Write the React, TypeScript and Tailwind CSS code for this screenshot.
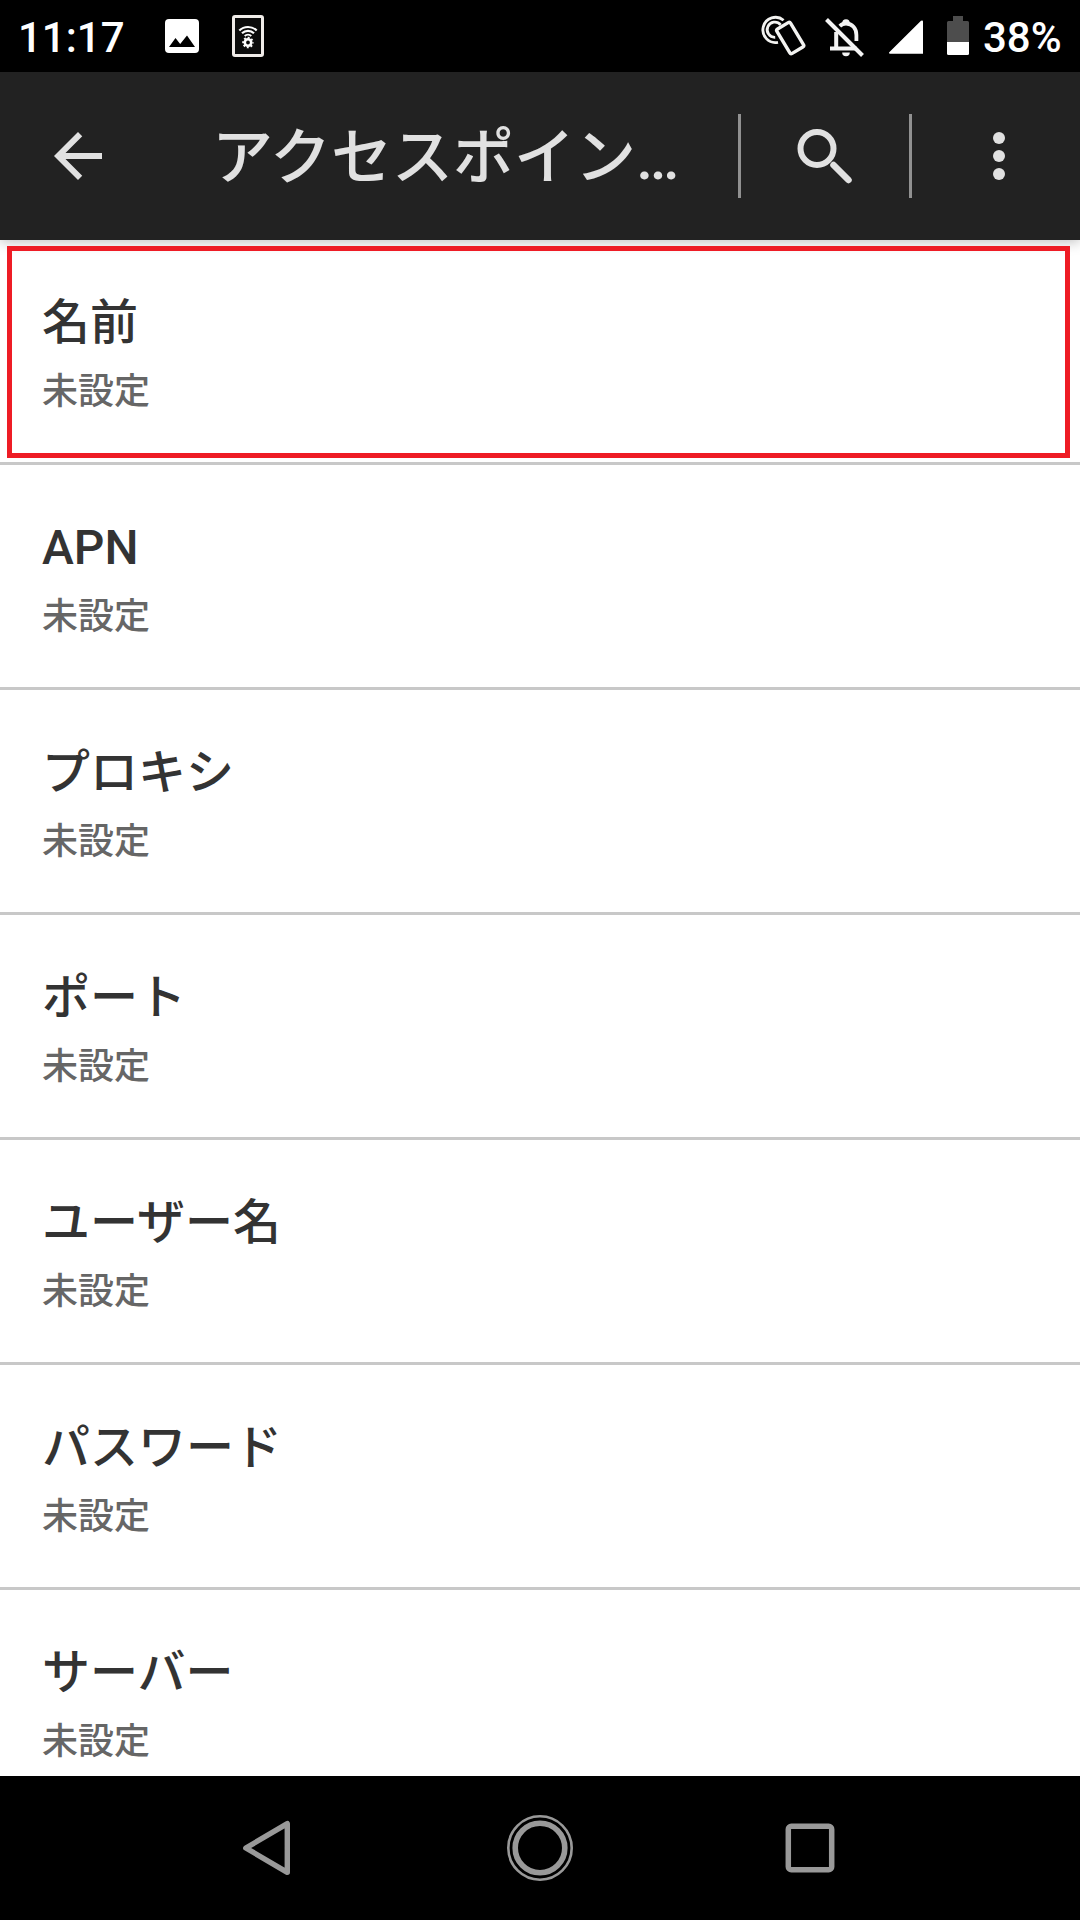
import React from 'react';

interface Setting {
  title: string;
  value: string;
  highlighted?: boolean;
}

const settings: Setting[] = [
  { title: '名前', value: '未設定', highlighted: true },
  { title: 'APN', value: '未設定' },
  { title: 'プロキシ', value: '未設定' },
  { title: 'ポート', value: '未設定' },
  { title: 'ユーザー名', value: '未設定' },
  { title: 'パスワード', value: '未設定' },
  { title: 'サーバー', value: '未設定' },
];

function PictureIcon() {
  return (
    <svg className="ml-[40px] h-9 w-9" viewBox="0 0 36 36">
      <rect x="1" y="1" width="34" height="34" rx="4" fill="#fff" />
      <path d="M5 29l6.500-9 4.700 6 6.800-8.500 8 11.500z" fill="#000" />
    </svg>
  );
}

function TetherIcon() {
  return (
    <svg className="ml-[32px] h-[42px] w-8" viewBox="0 0 32 42" fill="none" stroke="#fff">
      <rect x="1.500" y="1.500" width="29" height="39" rx="1.500" fill="#0c0c0c" stroke="#f0ece9" strokeWidth="3" />
      <path d="M7.300 15.500a12.500 12.500 0 0 1 17.400 0" strokeWidth="2.200" />
      <path d="M10 18.300a8.600 8.600 0 0 1 12 0" strokeWidth="2.200" />
      <path d="M12.700 21a4.800 4.800 0 0 1 6.600 0" strokeWidth="2" />
      <circle cx="16" cy="27.500" r="3.200" strokeWidth="2.600" />
      <circle cx="16" cy="27.500" r="4.900" strokeWidth="1.800" strokeDasharray="1.925 1.925" strokeDashoffset="0.960" />
    </svg>
  );
}

function TapIcon() {
  return (
    <svg className="h-[44px] w-[46px]" viewBox="0 0 46 44" fill="none" stroke="#f3f3f1" strokeWidth="2.800">
      <path d="M23.600 6.300A12.600 12.600 0 1 0 18 28.300" />
      <path d="M20.600 10.800A7.600 7.600 0 1 0 15.200 23.300" />
      <rect x="-8" y="-14.200" width="16" height="28.400" rx="1.800" transform="translate(30.200 24) rotate(-31)" strokeWidth="3.400" />
    </svg>
  );
}

function BellOffIcon() {
  return (
    <svg className="ml-[19px] h-[44px] w-[42px]" viewBox="0 0 42 44" fill="none" stroke="#f3f3f3">
      <path d="M17.200 9a3.600 3.600 0 1 1 7.600 0z" fill="#f3f3f3" stroke="none" />
      <path d="M14.800 12.200c2-2 4-2.700 6.200-2.700 6.200 0 10.400 4.800 10.400 11.400v6" strokeWidth="3.800" />
      <path d="M11.200 18v17M5 34.500h26.500" strokeWidth="4" />
      <path d="M17.200 38.500h7.600a3.800 3.800 0 0 1-7.600 0z" fill="#f3f3f3" stroke="none" />
      <path d="M1.500 5.500l36 36" strokeWidth="4" />
    </svg>
  );
}

function StatusBar() {
  return (
    <div className="flex h-[72px] shrink-0 items-center bg-black text-white">
      <span className="ml-[18px] w-[106px] pt-1 whitespace-nowrap text-[42px] leading-[72px] font-medium">11:17</span>
      <PictureIcon />
      <TetherIcon />
      <div className="ml-auto flex items-center">
        <TapIcon />
        <BellOffIcon />
        <svg className="ml-[21px] h-9 w-9" viewBox="0 0 36 36">
          <path d="M1 34.400L33 2.800q2-1.200 2 1v32H2q-1 0-1-1.400z" fill="#fff" />
        </svg>
        <svg className="ml-[22px] h-10 w-6" viewBox="0 0 24 40">
          <path d="M7 0h10v5h4.500q1.500 0 1.500 1.500V27H1V6.500Q1 5 2.500 5H7z" fill="#4d4d4d" />
          <path d="M1 26h22v11.500q0 1.500-1.500 1.500h-19Q1 39 1 37.500z" fill="#fff" />
        </svg>
        <span className="ml-[13px] w-[97px] pt-1 whitespace-nowrap text-[42px] leading-[72px] font-medium">38%</span>
      </div>
    </div>
  );
}

function Header() {
  return (
    <header className="relative z-10 flex h-[168px] shrink-0 items-center bg-[#222] text-[#e1e1e1] shadow-[0_2px_12px_rgba(0,0,0,0.25)]">
      <svg className="ml-[42px] h-[72px] w-[72px]" viewBox="0 0 24 24" fill="currentColor">
        <path d="M20 11H7.830l5.590-5.590L12 4l-8 8 8 8 1.410-1.410L7.830 13H20v-2z" />
      </svg>
      <h1 className="ml-[98px] w-[526px] pt-1 whitespace-nowrap text-[61px] leading-[84px] font-medium">アクセスポイン…</h1>
      <div className="h-[84px] w-[3px] bg-[#919191]" />
      <div className="flex w-[168px] justify-center">
        <svg className="h-[72px] w-[72px]" viewBox="0 0 72 72" fill="none" stroke="currentColor">
          <circle cx="28" cy="28.500" r="16.500" strokeWidth="6" />
          <path d="M44.500 45l15 15" strokeWidth="6.500" strokeLinecap="round" />
        </svg>
      </div>
      <div className="h-[84px] w-[3px] bg-[#919191]" />
      <div className="ml-[81px] flex flex-col gap-1.5">
        <span className="h-3 w-3 rounded-full bg-[#e1e1e1]" />
        <span className="h-3 w-3 rounded-full bg-[#e1e1e1]" />
        <span className="h-3 w-3 rounded-full bg-[#e1e1e1]" />
      </div>
    </header>
  );
}

function SettingRow({ title, value, highlighted }: Setting) {
  return (
    <li className="relative h-[225px] shrink-0 border-b-[3px] border-[#c8c8c8] pt-12 pl-[42px]">
      <div className="text-[48px] leading-[70px] font-medium text-[#333]">{title}</div>
      <div className="text-[36px] leading-[68px] font-medium text-[#666]">{value}</div>
      {highlighted && <div className="absolute top-[6px] left-[7px] z-20 h-[212px] w-[1063px] border-[5px] border-[#ee1c25]" />}
    </li>
  );
}

function NavBar() {
  return (
    <nav className="flex h-[144px] shrink-0 items-center justify-center gap-[198px] bg-black">
      <svg className="h-[72px] w-[72px]" viewBox="0 0 72 72" fill="none" stroke="#999" strokeWidth="5.400" strokeLinejoin="round">
        <path d="M11.800 36L53.300 11.700v48.600z" />
      </svg>
      <svg className="h-[72px] w-[72px]" viewBox="0 0 72 72" fill="none" stroke="#999">
        <circle cx="36" cy="36" r="31.700" strokeWidth="2.600" />
        <circle cx="36" cy="36" r="24.800" strokeWidth="5.600" />
      </svg>
      <svg className="h-[72px] w-[72px]" viewBox="0 0 72 72" fill="none" stroke="#999" strokeWidth="5.500">
        <rect x="14.300" y="14.300" width="43.400" height="43.400" rx="3" />
      </svg>
    </nav>
  );
}

export default function App() {
  return (
    <div className="flex h-[1920px] w-[1080px] flex-col overflow-hidden bg-white font-[Roboto,'Noto_Sans_CJK_JP',sans-serif]" lang="ja">
      <StatusBar />
      <Header />
      <ul className="flex min-h-0 flex-1 flex-col overflow-hidden">
        {settings.map((s) => (
          <SettingRow key={s.title} {...s} />
        ))}
      </ul>
      <NavBar />
    </div>
  );
}
